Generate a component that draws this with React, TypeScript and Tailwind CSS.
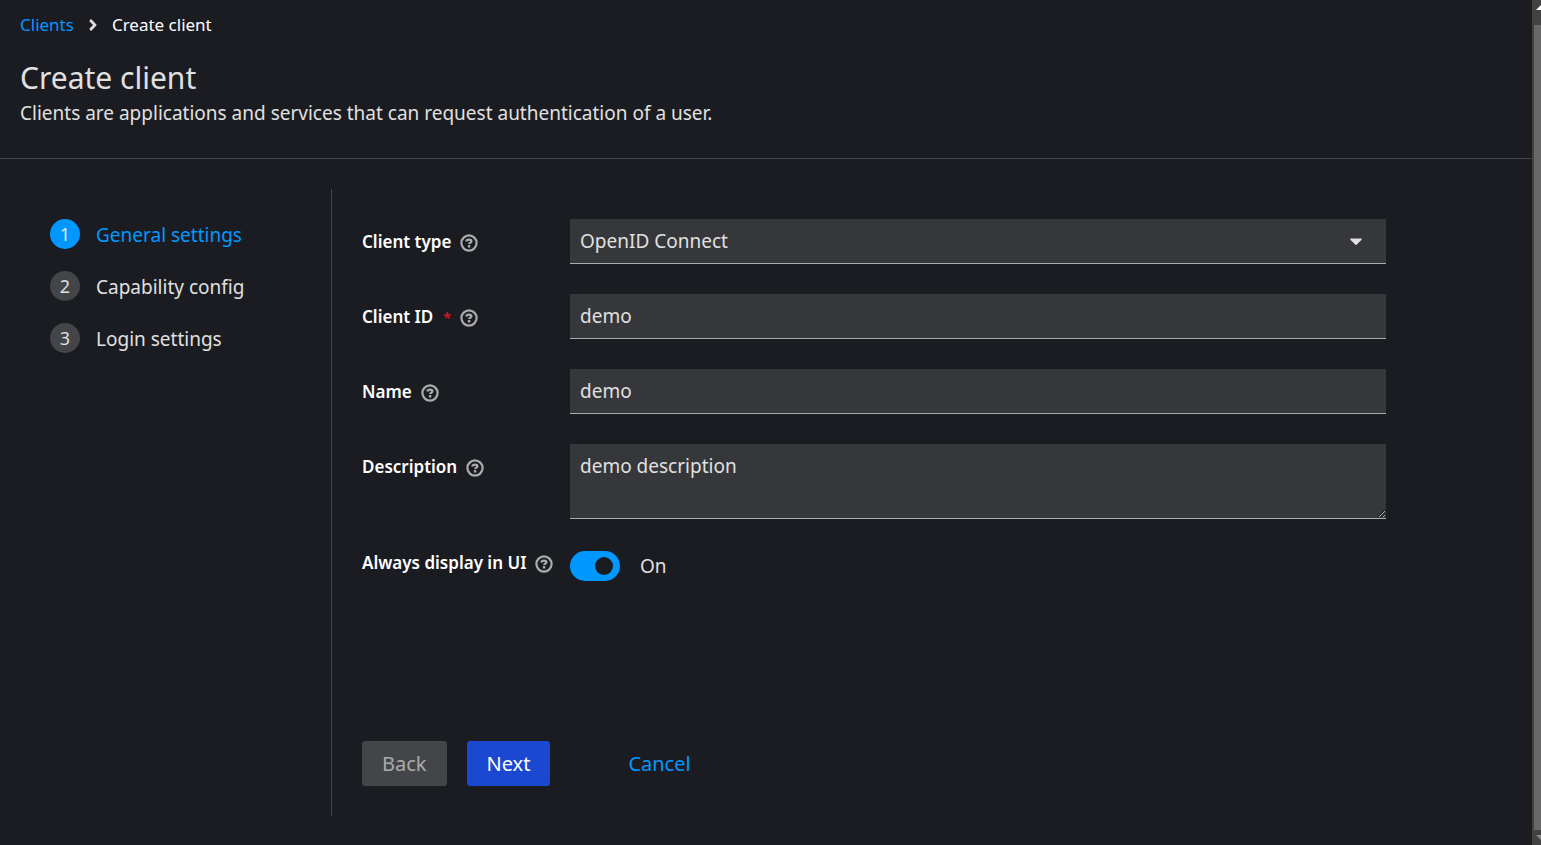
import { useState } from "react";
import type { ReactNode } from "react";
import { FaAngleRight, FaCaretDown } from "react-icons/fa";

const steps = ["General settings", "Capability config", "Login settings"];

const fieldClass =
  "block w-full appearance-none rounded-none border-b border-[#aaabac] bg-[#36373a] px-[10px] text-[19px] leading-[30px] text-[#e0e0e0] outline-none";

function HelpIcon() {
  return (
    <svg viewBox="0 0 18 18" fill="none" className="h-[18px] w-[18px]" aria-hidden="true">
      <circle cx="9" cy="9" r="7.6" stroke="#aaabac" strokeWidth="2.2" />
      <path
        d="M6.3 7.5C6.6 6 7.6 5.6 9 5.6c1.5 0 2.4.6 2.4 1.6 0 1.5-2.3 1.4-2.3 2.9"
        stroke="#aaabac"
        strokeWidth="2.3"
      />
      <rect x="7.9" y="11.1" width="2.4" height="2.3" rx="0.5" fill="#aaabac" />
    </svg>
  );
}

function Field({
  id,
  label,
  required,
  alignTop,
  children,
}: {
  id: string;
  label: string;
  required?: boolean;
  alignTop?: boolean;
  children: ReactNode;
}) {
  return (
    <div className="grid grid-cols-[188px_1fr] gap-5">
      <div className={`flex items-start ${alignTop ? "pt-[2px]" : "pt-[11px]"}`}>
        <label htmlFor={id} className="whitespace-nowrap text-[17px] font-semibold leading-6 text-white">
          {label}
          {required && <span className="ml-[10px] text-sm font-normal text-[#f01824]">*</span>}
        </label>
        <button type="button" aria-label={`Help for ${label}`} className="ml-[9px] mt-1">
          <HelpIcon />
        </button>
      </div>
      <div>{children}</div>
    </div>
  );
}

export default function App() {
  const [enabled, setEnabled] = useState(true);

  return (
    <div className="flex min-h-screen bg-[#1b1c21] font-['Noto_Sans',sans-serif] text-[#e0e0e0]">
      <main className="flex min-w-0 flex-1 flex-col">
        <header className="border-b border-[#444548] px-5 pb-[30px] pt-3">
          <nav aria-label="Breadcrumb" className="flex items-center text-[17px] leading-[26px]">
            <a href="#clients" className="text-[#0098ff]">
              Clients
            </a>
            <FaAngleRight className="mx-[10px] h-[18px] w-[18px]" />
            <span className="text-white">Create client</span>
          </nav>
          <h1 className="mt-[22px] text-[30px] leading-9">Create client</h1>
          <p className="mt-[2px] text-[19px] leading-[30px]">
            Clients are applications and services that can request authentication of a user.
          </p>
        </header>

        <div className="flex flex-1 pb-[29px] pt-[30px]">
          <nav aria-label="Steps" className="w-[332px] shrink-0 border-r border-[#444548] px-[50px] pt-[30px]">
            <ol className="flex flex-col gap-[22px]">
              {steps.map((step, i) => (
                <li key={step}>
                  <button
                    type="button"
                    className={`flex h-[30px] items-start gap-4 text-[19px] leading-8 ${i === 0 ? "text-[#0098ff]" : ""}`}
                  >
                    <span
                      className={`flex h-[30px] w-[30px] items-center justify-center rounded-full text-[18px] leading-none text-[#e0e0e0] ${
                        i === 0 ? "bg-[#0098ff]" : "bg-[#444548]"
                      }`}
                    >
                      {i + 1}
                    </span>
                    {step}
                  </button>
                </li>
              ))}
            </ol>
          </nav>

          <form className="flex min-w-0 flex-1 flex-col p-[30px]" onSubmit={(e) => e.preventDefault()}>
            <div className="flex max-w-5xl flex-col gap-[30px]">
              <Field id="client-type" label="Client type">
                <div className="relative">
                  <select id="client-type" className={`${fieldClass} h-[45px]`}>
                    <option>OpenID Connect</option>
                    <option>SAML</option>
                  </select>
                  <FaCaretDown className="pointer-events-none absolute right-5 top-3 h-5 w-5" />
                </div>
              </Field>
              <Field id="client-id" label="Client ID" required>
                <input id="client-id" className={`${fieldClass} h-[45px]`} defaultValue="demo" />
              </Field>
              <Field id="client-name" label="Name">
                <input id="client-name" className={`${fieldClass} h-[45px]`} defaultValue="demo" />
              </Field>
              <Field id="client-description" label="Description">
                <textarea
                  id="client-description"
                  className={`${fieldClass} h-[75px] resize-y py-[7px]`}
                  defaultValue="demo description"
                />
              </Field>
              <Field id="always-display" label="Always display in UI" alignTop>
                <label className="flex w-fit items-center gap-5 pt-[2px] text-[19px] leading-[30px]">
                  <input
                    id="always-display"
                    type="checkbox"
                    role="switch"
                    checked={enabled}
                    onChange={(e) => setEnabled(e.target.checked)}
                    className="peer sr-only"
                  />
                  <span className="flex h-[30px] w-[50px] items-center rounded-full bg-[#444548] px-[7px] peer-checked:justify-end peer-checked:bg-[#0098ff]">
                    <span className="h-[18px] w-[18px] rounded-full bg-[#1b1c21]" />
                  </span>
                  {enabled ? "On" : "Off"}
                </label>
              </Field>
            </div>

            <div className="mt-auto flex text-xl leading-[30px]">
              <button type="button" disabled className="h-[45px] rounded-[3px] bg-[#444548] px-5 text-[#aaabac]">
                Back
              </button>
              <button type="submit" className="ml-5 h-[45px] rounded-[3px] bg-[#1b48d0] px-5 text-white">
                Next
              </button>
              <button type="button" className="ml-[58px] h-[45px] px-5 text-[#0098ff]">
                Cancel
              </button>
            </div>
          </form>
        </div>
      </main>

      <div aria-hidden="true" className="flex w-[9px] shrink-0 flex-col overflow-hidden bg-[#424242] pl-[2px]">
        <svg viewBox="0 0 7 25" className="h-[25px] w-[7px]">
          <path d="M2 10L7 5v5z" fill="#fff" />
        </svg>
        <div className="flex-1 bg-[#686868]" />
        <svg viewBox="0 0 7 15" className="h-[15px] w-[7px]">
          <path d="M2 5h5v5z" fill="#8a8a8a" />
        </svg>
      </div>
    </div>
  );
}
